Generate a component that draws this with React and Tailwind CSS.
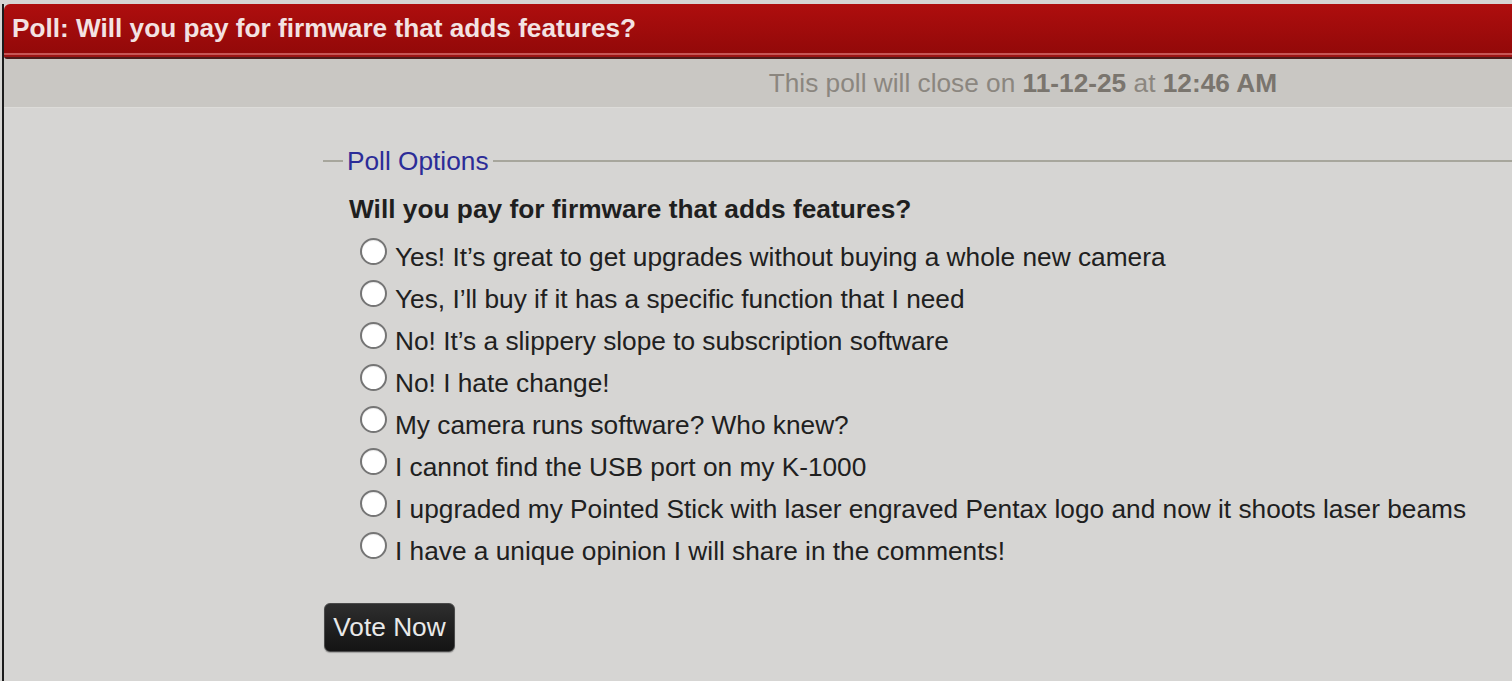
import React from "react";

const options = [
  "Yes! It’s great to get upgrades without buying a whole new camera",
  "Yes, I’ll buy if it has a specific function that I need",
  "No! It’s a slippery slope to subscription software",
  "No! I hate change!",
  "My camera runs software? Who knew?",
  "I cannot find the USB port on my K-1000",
  "I upgraded my Pointed Stick with laser engraved Pentax logo and now it shoots laser beams",
  "I have a unique opinion I will share in the comments!",
];

export default function App() {
  return (
    <div
      className="min-h-[681px] bg-[#d6d5d3] pt-[4px] overflow-hidden"
      style={{ fontFamily: '"Liberation Sans", Arial, sans-serif' }}
    >
      <div className="ml-[2px] border-l-[2px] border-[#1b1b1b] min-h-[677px] flex flex-col">
        {/* Red header */}
        <div className="flex flex-col rounded-tl-[6px] rounded-bl-[3px] overflow-hidden">
          <div className="h-[49px] bg-gradient-to-b from-[#ae0e0e] to-[#930909] flex items-center pl-[8px]">
            <span className="text-[26.2px] font-bold text-[#f3e2e2] leading-none whitespace-nowrap">
              Poll: Will you pay for firmware that adds features?
            </span>
          </div>
          <div className="h-[2px] bg-[#c75656]" />
          <div className="h-[2px] bg-[#9c1414]" />
          <div className="h-[2px] bg-[#4d1b1b]" />
        </div>

        {/* Close info band */}
        <div className="h-[49px] bg-[#c9c7c3] border-b border-[#dddcd9] flex items-center justify-end pr-[235px]">
          <span className="text-[26.25px] text-[#8b867f] whitespace-nowrap leading-none">
            This poll will close on <b className="text-[#7a756e]">11-12-25</b> at{" "}
            <b className="text-[#7a756e]">12:46 AM</b>
          </span>
        </div>

        {/* Main */}
        <div className="flex flex-col pl-[319px] pt-[37px]">
          {/* Legend row */}
          <div className="h-[32px] flex items-center">
            <div className="w-[20px] h-[2px] bg-[#a7a69c]" />
            <span className="px-[4px] text-[26.25px] leading-[32px] text-[#2c2c98] whitespace-nowrap">
              Poll Options
            </span>
            <div className="flex-1 h-[2px] bg-[#a7a69c]" />
          </div>

          <div className="pl-[26px] mt-[11px] h-[42px] leading-[42px] text-[26.3px] font-bold text-[#1f1f1f] whitespace-nowrap">
            Will you pay for firmware that adds features?
          </div>

          <div className="flex flex-col mt-[6px] pl-[37px]">
            {options.map((o) => (
              <label key={o} className="h-[42px] flex items-start whitespace-nowrap">
                <span className="mt-[2px] w-[27px] h-[27px] rounded-full border-[2px] border-[#757575] bg-white shrink-0 shadow-[inset_0_1px_1px_rgba(0,0,0,0.08)]" />
                <span className="ml-[8px] text-[26.25px] leading-[42px] text-[#202020]">{o}</span>
              </label>
            ))}
          </div>

          <div className="mt-[31px] pl-[1px]">
            <button className="h-[49px] w-[131px] rounded-[6px] border border-[#4a4a4a] bg-gradient-to-b from-[#2e2e2e] to-[#141414] text-[26.25px] text-[#e9e9e9] leading-none shadow-[0_1px_1px_rgba(0,0,0,0.25)]">
              Vote Now
            </button>
          </div>
        </div>
      </div>
    </div>
  );
}
